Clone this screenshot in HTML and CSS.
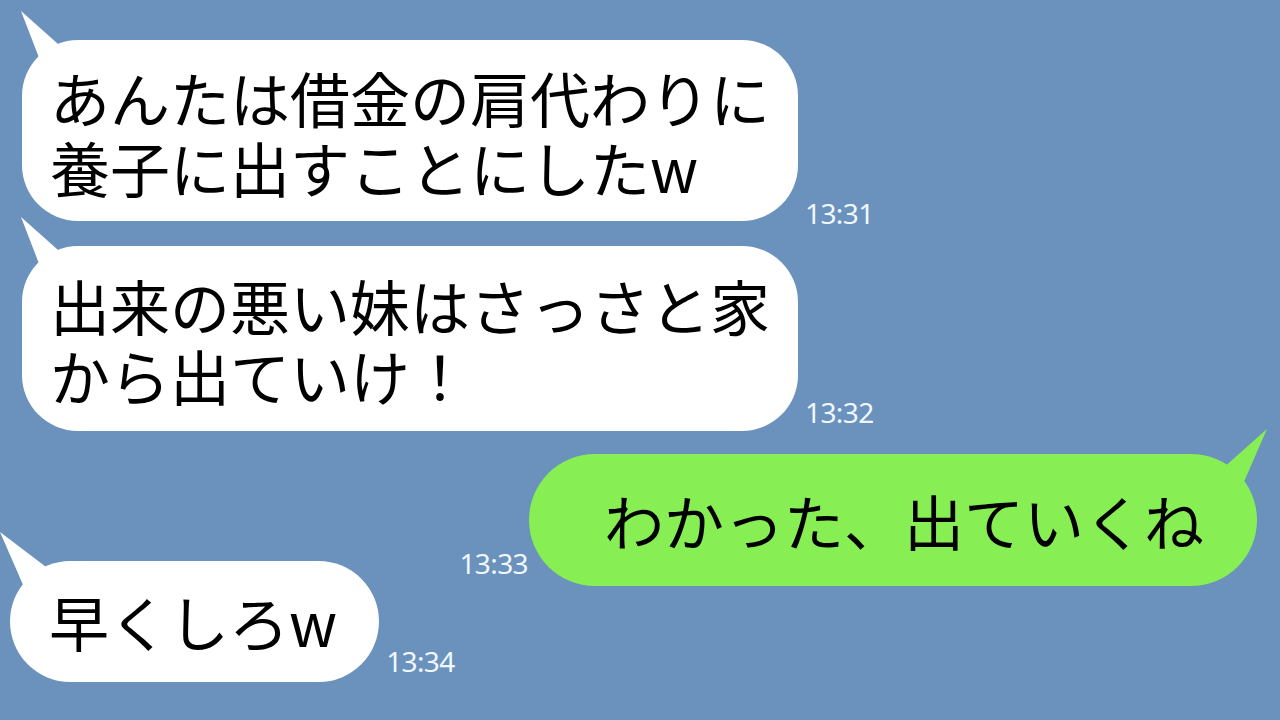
FILE: index.html
```html
<!DOCTYPE html>
<html lang="ja">
<head>
  <meta charset="UTF-8">
  <meta name="viewport" content="width=device-width, initial-scale=1.0">
  <title>トーク</title>

  <link rel="stylesheet" href="styles.css">
</head>
<body>
  <div id="talk">
    <div class="row row_1">
      <div class="bubble in two_line">あんたは借金の肩代わりに<br>養子に出すことにしたw</div>
      <span class="time t_1">13:31</span>
    </div>
    <div class="row row_2">
      <div class="bubble in two_line">出来の悪い妹はさっさと家<br>から出ていけ！</div>
      <span class="time t_2">13:32</span>
    </div>
    <div class="row row_3 mine">
      <span class="time t_3">13:33</span>
      <div class="bubble out">わかった、出ていくね</div>
    </div>
    <div class="row row_4">
      <div class="bubble in short">早くしろw</div>
      <span class="time t_4">13:34</span>
    </div>
  </div>
</body>
</html>
```

FILE: styles.css
```css
body{
  margin: 0;
  width: 1280px;
  height: 720px;
  overflow: hidden;
  background-color: #6b91bd;
  font-family: "Noto Sans CJK JP", "Noto Sans", sans-serif;
}

#talk{
  display: flex;
  flex-direction: column;
  padding-top: 40px;
}

.row{
  display: flex;
  align-items: flex-end;
  gap: 7px;
}

.mine{
  justify-content: flex-end;
  gap: 1px;
  padding-right: 23px;
}

.row_1, .row_2{
  padding-left: 22px;
}

.row_2{
  margin-top: 25px;
}

.row_3{
  margin-top: 23px;
}

.row_4{
  margin-top: -25px;
  padding-left: 10px;
}

.bubble{
  position: relative;
  font-size: 60px;
  line-height: 70px;
  color: #000;
  white-space: nowrap;
}

.bubble::before{
  content: "";
  position: absolute;
  background-color: inherit;
}

.in{
  background-color: #fff;
}

.two_line{
  border-radius: 56px;
  padding: 22px 28px 19px 28px;
}

.row_2 .two_line{
  padding: 24px 28px 21px 28px;
}

.in::before{
  left: -5px;
  top: -32px;
  width: 60px;
  height: 65px;
  clip-path: polygon(4px 3px, 50px 44px, 26px 60px);
}

.short{
  border-radius: 61px;
  padding: 25px 42px 26px 39px;
}

.short::before{
  left: -14px;
  top: -32px;
  width: 62px;
  height: 70px;
  clip-path: polygon(4px 3px, 58px 44px, 31px 65px);
}

.out{
  background-color: #87ee54;
  border-radius: 66px;
  padding: 31px 53px 31px 75px;
}

.out::before{
  right: -14px;
  top: -30px;
  width: 56px;
  height: 64px;
  clip-path: polygon(52px 5px, 7px 45px, 28px 60px);
}

.time{
  font-family: "Noto Sans", sans-serif;
  font-size: 28px;
  line-height: 30px;
  letter-spacing: -0.6px;
  color: #f0f8ff;
}

.t_1{
  margin-bottom: -7px;
}

.t_2{
  margin-bottom: 4px;
}

.t_3{
  margin-bottom: 8px;
}

.t_4{
  margin-bottom: 6px;
}
```
